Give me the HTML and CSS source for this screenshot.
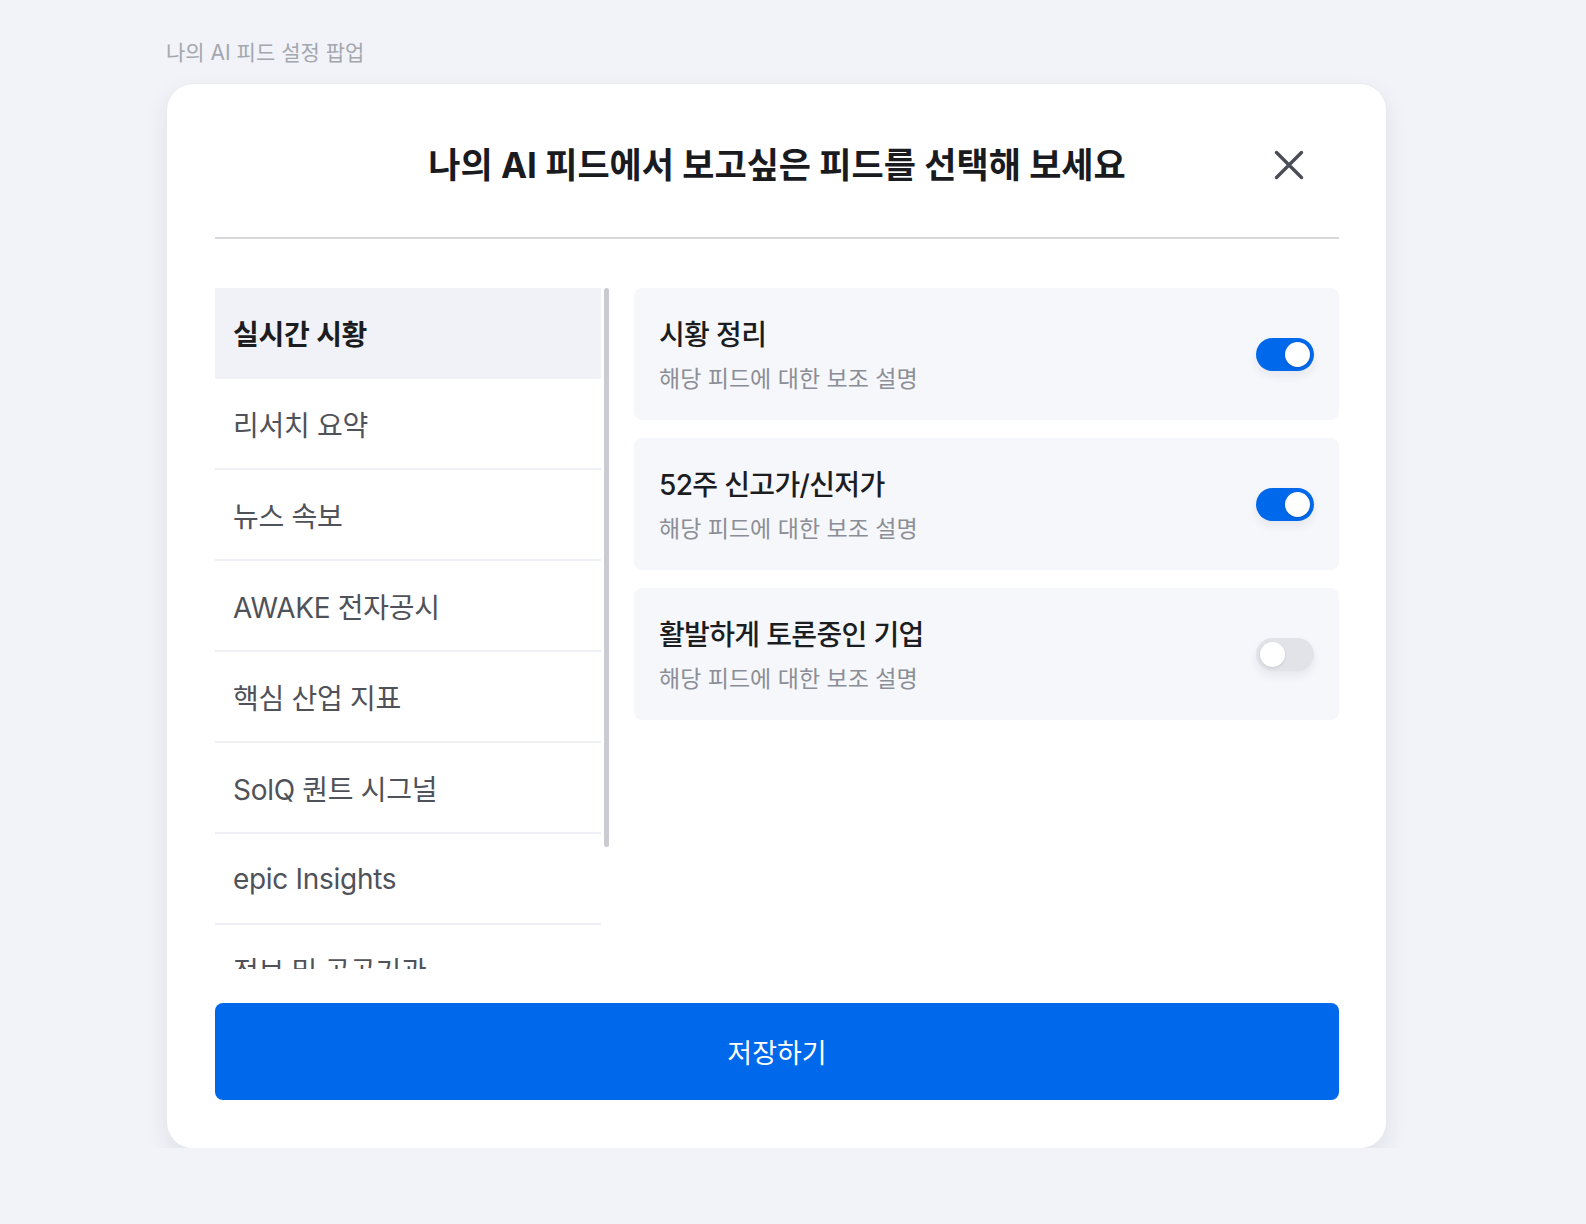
FILE: index.html
```html
<!DOCTYPE html>
<html lang="ko">
<head>
<meta charset="utf-8">
<title>나의 AI 피드 설정 팝업</title>
<link rel="stylesheet" href="styles.css">
</head>
<body>
<div class="page">
  <div class="caption">나의 AI 피드 설정 팝업</div>
  <div class="modal">
    <div class="modal-header">
      <span class="spacer"></span>
      <h1 class="modal-title">나의 AI 피드에서 보고싶은 피드를 선택해 보세요</h1>
      <button class="close" aria-label="닫기">
        <svg width="36" height="36" viewBox="0 0 36 36" fill="none" stroke="#4a4d55" stroke-width="3.4" stroke-linecap="round">
          <path d="M5.5 5.5L30.5 30.5M30.5 5.5L5.5 30.5"/>
        </svg>
      </button>
    </div>
    <div class="modal-body">
      <div class="category-wrap">
        <ul class="category-list">
          <li class="category active">실시간 시황</li>
          <li class="category">리서치 요약</li>
          <li class="category">뉴스 속보</li>
          <li class="category">AWAKE 전자공시</li>
          <li class="category">핵심 산업 지표</li>
          <li class="category">SolQ 퀀트 시그널</li>
          <li class="category">epic Insights</li>
          <li class="category">정보 및 공공기관</li>
        </ul>
        <div class="scrollbar"><div class="thumb"></div></div>
      </div>
      <div class="feed-list">
        <div class="feed-card">
          <div class="feed-text">
            <div class="feed-title">시황 정리</div>
            <div class="feed-sub">해당 피드에 대한 보조 설명</div>
          </div>
          <div class="toggle on"><span class="knob"></span></div>
        </div>
        <div class="feed-card">
          <div class="feed-text">
            <div class="feed-title">52주 신고가/신저가</div>
            <div class="feed-sub">해당 피드에 대한 보조 설명</div>
          </div>
          <div class="toggle on"><span class="knob"></span></div>
        </div>
        <div class="feed-card">
          <div class="feed-text">
            <div class="feed-title">활발하게 토론중인 기업</div>
            <div class="feed-sub">해당 피드에 대한 보조 설명</div>
          </div>
          <div class="toggle"><span class="knob"></span></div>
        </div>
      </div>
    </div>
    <button class="save">저장하기</button>
  </div>
</div>
</body>
</html>
```

FILE: styles.css
```css
* { box-sizing: border-box; }
html, body { margin: 0; padding: 0; }
body {
  background: #f1f3f8;
  font-family: Inter, "Noto Sans CJK KR", sans-serif;
  color: #1c1d21;
}
.page {
  padding: 39px 0 0 166px;
}
.caption {
  font-size: 21px;
  line-height: 28px;
  color: #a4a7ae;
}
.modal {
  margin-top: 17px;
  margin-left: 1px;
  width: 1219px;
  background: #ffffff;
  border-radius: 26px;
  box-shadow: 0 0 0 1px #e8eaef, 0 10px 24px rgba(30, 40, 70, 0.09);
  padding: 0 47px 48px 48px;
}
.modal-header {
  display: grid;
  grid-template-columns: 1fr auto 1fr;
  align-items: center;
  padding: 56px 0 47px;
  border-bottom: 2px solid #d6d8dd;
}
.modal-title {
  margin: 0;
  font-size: 35px;
  line-height: 50px;
  font-weight: 700;
  color: #1a1b1f;
  white-space: nowrap;
}
.close {
  justify-self: end;
  margin-right: 32px;
  width: 36px;
  height: 36px;
  padding: 0;
  border: 0;
  background: transparent;
  display: flex;
}
.modal-body {
  margin-top: 49px;
  height: 681px;
  display: flex;
  align-items: flex-start;
}
.category-wrap {
  display: flex;
  height: 100%;
}
.category-list {
  list-style: none;
  margin: 0;
  padding: 0;
  width: 386px;
  height: 100%;
  overflow: hidden;
}
.category {
  height: 91px;
  flex-shrink: 0;
  display: flex;
  align-items: center;
  padding-left: 18px;
  border-bottom: 2px solid #eef0f5;
  font-size: 28px;
  letter-spacing: -0.3px;
  color: #4f5259;
}
.category.active {
  background: #f0f2f7;
  border-bottom-color: #f0f2f7;
  font-weight: 600;
  color: #1c1d21;
}
.scrollbar {
  margin-left: 3px;
  width: 5px;
  height: 100%;
}
.thumb {
  width: 5px;
  height: 559px;
  border-radius: 3px;
  background: #c9cbd1;
}
.feed-list {
  flex: 1;
  margin-left: 25px;
  display: flex;
  flex-direction: column;
  gap: 18px;
}
.feed-card {
  height: 132px;
  background: #f6f7fb;
  border-radius: 8px;
  padding: 0 25px;
  display: flex;
  align-items: center;
  justify-content: space-between;
}
.feed-text {
  padding-top: 4px;
}
.feed-title {
  font-size: 28px;
  line-height: 36px;
  font-weight: 500;
  letter-spacing: -0.65px;
  color: #1c1d21;
}
.feed-sub {
  margin-top: 10px;
  font-size: 23px;
  line-height: 32px;
  color: #8b8e96;
}
.toggle {
  width: 58px;
  height: 33px;
  border-radius: 17px;
  background: #e2e3e8;
  padding: 4px;
  display: flex;
  justify-content: flex-start;
  box-shadow: 0 5px 10px rgba(20, 30, 60, 0.07);
}
.toggle.on {
  background: #0068ea;
  justify-content: flex-end;
}
.knob {
  width: 25px;
  height: 25px;
  border-radius: 50%;
  background: #ffffff;
  box-shadow: 0 1px 3px rgba(0, 0, 0, 0.12);
}
.save {
  display: block;
  width: 100%;
  margin-top: 34px;
  height: 97px;
  border: 0;
  border-radius: 8px;
  background: #0068ea;
  color: #ffffff;
  font-family: Inter, "Noto Sans CJK KR", sans-serif;
  font-size: 27px;
}
```
